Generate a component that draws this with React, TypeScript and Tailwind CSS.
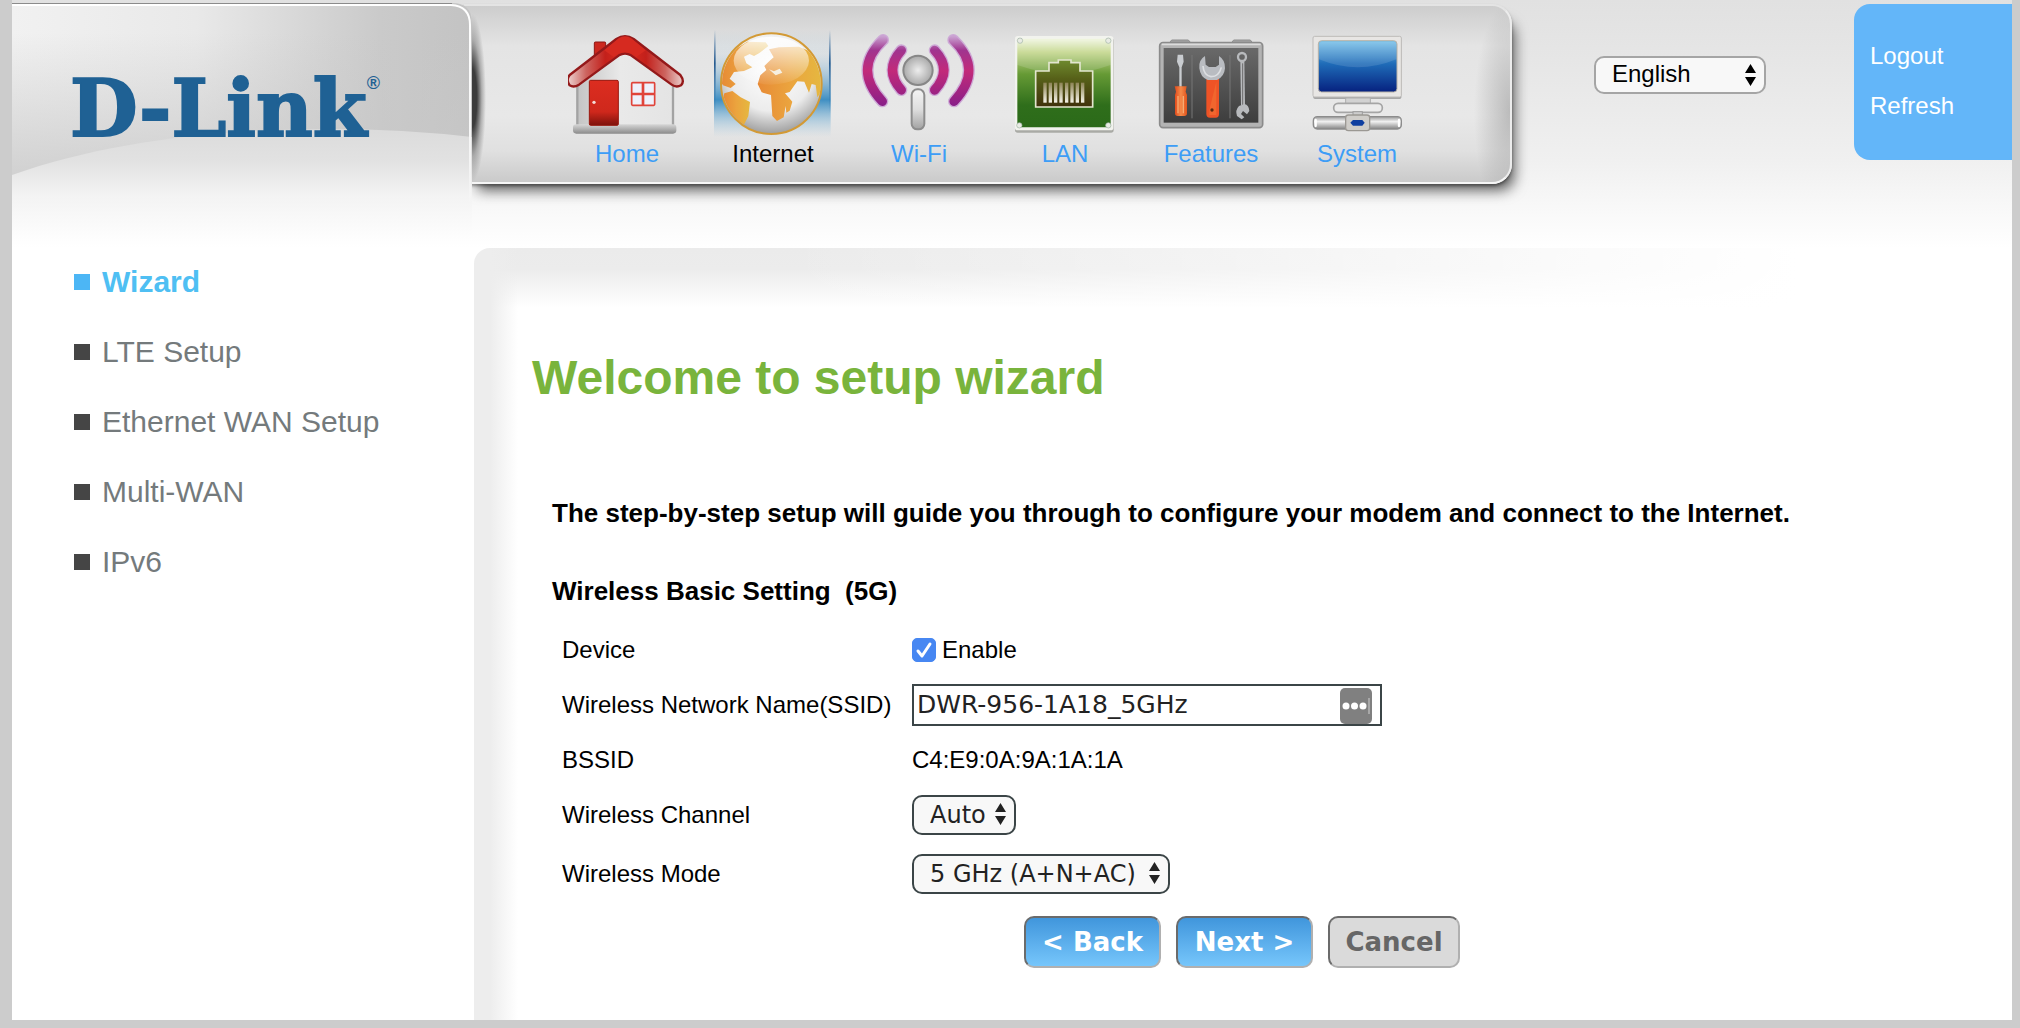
import { useState } from "react";
import type { ReactNode } from "react";

function HomeIcon() {
  return (
    <svg viewBox="87 60 354 324" className="h-[108px] w-[118px]" aria-hidden="true">
      <defs>
        <linearGradient id="wall" x1="0" x2="1" y1="0" y2="0">
          <stop offset="0" stopColor="#c4c4c4" />
          <stop offset="0.45" stopColor="#e9e9e9" />
          <stop offset="1" stopColor="#e4e4e4" />
        </linearGradient>
        <linearGradient id="door" x1="0" x2="0" y1="0" y2="1">
          <stop offset="0" stopColor="#dc2d20" />
          <stop offset="0.7" stopColor="#cf281c" />
          <stop offset="1" stopColor="#7d120c" />
        </linearGradient>
        <linearGradient id="base" x1="0" x2="0" y1="0" y2="1">
          <stop offset="0" stopColor="#d6d6d6" />
          <stop offset="1" stopColor="#8b8b8b" />
        </linearGradient>
        <linearGradient id="roof" gradientUnits="userSpaceOnUse" x1="90" x2="430" y1="0" y2="0">
          <stop offset="0" stopColor="#eacbc9" />
          <stop offset="0.15" stopColor="#cd6560" />
          <stop offset="0.32" stopColor="#c3201b" />
          <stop offset="0.5" stopColor="#dc2d20" />
          <stop offset="0.68" stopColor="#c3201b" />
          <stop offset="0.85" stopColor="#cd6560" />
          <stop offset="1" stopColor="#eacbc9" />
        </linearGradient>
      </defs>
      <path d="M115 225 L258 120 L402 225 V350 H115 Z" fill="url(#wall)" stroke="#a3a3a3" strokeWidth="7" />
      <rect x="102" y="343" width="310" height="28" rx="10" fill="url(#base)" />
      <rect x="166" y="96" width="34" height="50" rx="3" fill="#cc281f" stroke="#8c1714" strokeWidth="3" />
      <path
        d="M92 195 L232 87 Q258 70 284 87 L424 195 Q438 214 426 226 Q412 234 398 224 L276 136 Q258 126 240 136 L120 224 Q104 234 92 226 Q80 210 92 195 Z"
        fill="url(#roof)"
        stroke="#94191a"
        strokeWidth="7"
        strokeLinejoin="round"
      />
      <path d="M196 121 L240 84 Q258 74 276 84 L320 121 L292 141 L276 130 Q258 122 240 130 L224 141 Z" fill="#d62a20" />
      <rect x="151" y="211" width="87" height="135" rx="4" fill="url(#door)" stroke="#98180f" strokeWidth="3" />
      <circle cx="165" cy="277" r="5" fill="#f3dcd8" />
      <rect x="278" y="218" width="69" height="68" rx="3" fill="#eef1fb" stroke="#e0443a" strokeWidth="5" />
      <path d="M312 218 V286 M278 252 H347" stroke="#e0443a" strokeWidth="8" />
    </svg>
  );
}

function InternetIcon() {
  return (
    <svg viewBox="525 60 354 324" className="h-[108px] w-[118px]" aria-hidden="true">
      <defs>
        <linearGradient id="glow" x1="0" x2="0" y1="0" y2="1">
          <stop offset="0" stopColor="#3b8cc0" stopOpacity="0" />
          <stop offset="0.22" stopColor="#a8c8dc" stopOpacity="0.15" />
          <stop offset="0.65" stopColor="#3f8fc3" />
          <stop offset="1" stopColor="#9fc8e0" stopOpacity="0" />
        </linearGradient>
        <linearGradient id="glowEdge" x1="0" x2="0" y1="0" y2="1">
          <stop offset="0" stopColor="#245a90" stopOpacity="0" />
          <stop offset="0.4" stopColor="#245a90" />
          <stop offset="1" stopColor="#2b74ae" stopOpacity="0" />
        </linearGradient>
        <radialGradient id="sea" cx="0.5" cy="0.35" r="0.65">
          <stop offset="0" stopColor="#ffffff" />
          <stop offset="0.65" stopColor="#ececec" />
          <stop offset="1" stopColor="#9f9f9f" />
        </radialGradient>
        <linearGradient id="land" x1="0" x2="1" y1="0" y2="0">
          <stop offset="0" stopColor="#e78a35" />
          <stop offset="0.5" stopColor="#eba43e" />
          <stop offset="1" stopColor="#e5b840" />
        </linearGradient>
        <linearGradient id="shine" x1="0" x2="0" y1="0" y2="1">
          <stop offset="0" stopColor="#ffffff" stopOpacity="0.85" />
          <stop offset="1" stopColor="#ffffff" stopOpacity="0.05" />
        </linearGradient>
        <clipPath id="globeClip">
          <circle cx="697" cy="221" r="148" />
        </clipPath>
      </defs>
      <rect x="525" y="60" width="350" height="322" fill="url(#glow)" />
      <rect x="525" y="60" width="5" height="250" fill="url(#glowEdge)" />
      <rect x="870" y="60" width="5" height="250" fill="url(#glowEdge)" />
      <circle cx="697" cy="221" r="151" fill="url(#sea)" stroke="#d39a35" strokeWidth="6" />
      <g clipPath="url(#globeClip)" fill="url(#land)">
        <path d="M545 215 L550 170 L585 120 L625 95 L680 97 L688 108 L660 130 L645 138 L632 132 L615 140 L622 160 L640 172 L615 183 L585 186 L572 206 L590 222 L575 234 L552 226 Z" />
        <path d="M556 250 L580 243 L605 262 L633 276 L628 318 L612 350 L595 330 L570 300 L552 270 Z" />
        <path d="M690 118 L720 112 L780 110 L850 140 V240 L835 262 L830 225 L818 222 L810 248 L796 215 L775 214 L752 246 L738 250 L760 275 L752 302 L742 308 L740 288 L734 322 L714 333 L700 318 L696 255 L668 247 L656 222 L664 196 L682 180 L676 168 L692 152 L704 142 Z" />
        <path d="M690 178 L705 184 L722 176 L730 188 L710 196 Z" fill="#f3ead6" />
      </g>
      <ellipse cx="697" cy="152" rx="113" ry="72" fill="url(#shine)" />
    </svg>
  );
}

function WifiIcon() {
  return (
    <svg viewBox="63 60 354 324" className="h-[108px] w-[118px]" aria-hidden="true">
      <defs>
        <linearGradient id="wave" gradientUnits="userSpaceOnUse" x1="0" x2="0" y1="80" y2="285">
          <stop offset="0" stopColor="#c9a0d0" />
          <stop offset="0.2" stopColor="#a0348f" />
          <stop offset="0.5" stopColor="#c22a7a" />
          <stop offset="1" stopColor="#8a1f88" />
        </linearGradient>
        <radialGradient id="ball">
          <stop offset="0" stopColor="#ededed" />
          <stop offset="1" stopColor="#a9a9a9" />
        </radialGradient>
        <linearGradient id="stick" x1="0" x2="0" y1="0" y2="1">
          <stop offset="0" stopColor="#f4f4f4" />
          <stop offset="0.5" stopColor="#dedede" />
          <stop offset="1" stopColor="#a2a2a2" />
        </linearGradient>
      </defs>
      <g fill="none" strokeLinecap="round">
        <g stroke="#cda9d6" strokeWidth="36">
          <path d="M132 90 Q40 178 130 274" />
          <path d="M343 90 Q435 178 345 274" />
          <path d="M187 121 Q134 180 187 240" />
          <path d="M287 121 Q342 180 287 240" />
        </g>
        <g stroke="url(#wave)" strokeWidth="28">
          <path d="M132 90 Q40 178 130 274" />
          <path d="M343 90 Q435 178 345 274" />
          <path d="M187 121 Q134 180 187 240" />
          <path d="M287 121 Q342 180 287 240" />
        </g>
      </g>
      <circle cx="237" cy="181" r="44" fill="url(#ball)" stroke="#878787" strokeWidth="6" />
      <rect x="218" y="238" width="38" height="120" rx="17" fill="url(#stick)" stroke="#8d8d8d" strokeWidth="6" />
    </svg>
  );
}

function LanIcon() {
  return (
    <svg viewBox="501 60 354 324" className="h-[108px] w-[118px]" aria-hidden="true">
      <defs>
        <linearGradient id="plate" x1="0" x2="0" y1="0" y2="1">
          <stop offset="0" stopColor="#f1f6e2" />
          <stop offset="0.15" stopColor="#c3d68a" />
          <stop offset="0.4" stopColor="#669a35" />
          <stop offset="0.75" stopColor="#2f6e1b" />
          <stop offset="1" stopColor="#2b6a19" />
        </linearGradient>
        <linearGradient id="jack" x1="0" x2="0" y1="0" y2="1">
          <stop offset="0" stopColor="#6f8a2f" />
          <stop offset="0.4" stopColor="#566018" />
          <stop offset="1" stopColor="#40310c" />
        </linearGradient>
        <linearGradient id="pin" x1="0" x2="0" y1="0" y2="1">
          <stop offset="0" stopColor="#8d8455" />
          <stop offset="1" stopColor="#f6f4e9" />
        </linearGradient>
      </defs>
      <rect x="528" y="84" width="296" height="284" rx="8" fill="#a9aaa5" />
      <rect x="528" y="78" width="295" height="283" rx="8" fill="#f2f3ee" />
      <rect x="535" y="86" width="280" height="266" rx="4" fill="url(#plate)" />
      <path d="M535 90 H815 V165 Q675 215 535 165 Z" fill="#ffffff" opacity="0.14" />
      <path d="M590 183 H630 V158 H658 V150 H696 V158 H723 V183 H761 V291 H590 Z" fill="url(#jack)" stroke="#e3e6cf" strokeWidth="5" />
      {[613, 629, 645, 661, 678, 694, 710, 726].map((x) => (
        <rect key={x} x={x} y="218" width="10" height="60" fill="url(#pin)" />
      ))}
      <g fill="#e9ebe4" stroke="#9fb2a4" strokeWidth="2">
        <circle cx="543" cy="92" r="8" />
        <circle cx="808" cy="92" r="8" />
        <circle cx="541" cy="346" r="8" />
        <circle cx="808" cy="346" r="8" />
      </g>
    </svg>
  );
}

function FeaturesIcon() {
  return (
    <svg viewBox="69 60 354 324" className="h-[108px] w-[118px]" aria-hidden="true">
      <defs>
        <linearGradient id="toolbox" x1="0" x2="0" y1="0" y2="1">
          <stop offset="0" stopColor="#696969" />
          <stop offset="1" stopColor="#3d3d3d" />
        </linearGradient>
        <linearGradient id="grip" x1="0" x2="1" y1="0" y2="0">
          <stop offset="0" stopColor="#e0481a" />
          <stop offset="0.5" stopColor="#f58a4a" />
          <stop offset="1" stopColor="#e2541c" />
        </linearGradient>
      </defs>
      <path d="M120 100 L128 90 H178 L187 100 M306 100 L314 90 H364 L372 100" fill="#a3a3a3" stroke="#8f8f8f" strokeWidth="3" />
      <rect x="92" y="98" width="309" height="255" rx="10" fill="#b3b3b3" stroke="#8b8b8b" strokeWidth="5" />
      <path d="M98 103 H395" stroke="#dcdcdc" strokeWidth="5" />
      <rect x="104" y="114" width="284" height="224" fill="url(#toolbox)" />
      <path d="M189 135 V325 M303 135 V325" stroke="#777777" strokeWidth="3" />
      <path d="M146 134 H162 L164 155 L158 172 V230 H151 V172 L144 155 Z" fill="#c9ccd0" />
      <path d="M137 229 H173 L170 245 L174 255 V310 Q174 318 166 318 H146 Q138 318 138 310 V255 L141 245 Z" fill="url(#grip)" />
      <path d="M147 258 V310 M163 258 V310" stroke="#f7ab72" strokeWidth="4" />
      <path d="M232 205 H270 V312 Q270 323 260 323 H243 Q232 323 232 312 Z" fill="#ee5326" />
      <path d="M241 300 L262 215 V315 H241 Z" fill="#f47a35" opacity="0.5" />
      <circle cx="249" cy="300" r="5" fill="#5f2a10" />
      <path d="M228 138 Q208 150 211 175 Q214 202 236 210 H264 Q286 200 288 175 Q289 150 270 138 V164 L260 171 H240 L230 164 Z" fill="#b9bcc1" />
      <path d="M222 168 Q224 196 246 200 Q270 200 277 172" fill="none" stroke="#dddfe2" strokeWidth="5" />
      <circle cx="339" cy="141" r="12" fill="none" stroke="#b8babd" strokeWidth="7" />
      <path d="M334 155 H346 L348 286 H336 Z" fill="#b8babd" />
      <path d="M341 160 V285" stroke="#6b6b6b" strokeWidth="3" />
      <path d="M330 288 Q318 300 324 318 L338 328 L346 322 L336 312 L342 303 L354 313 L361 303 Q360 285 346 282 Z" fill="#b8babd" />
    </svg>
  );
}

function SystemIcon() {
  return (
    <svg viewBox="507 60 354 324" className="h-[108px] w-[118px]" aria-hidden="true">
      <defs>
        <linearGradient id="screen" x1="0" x2="0" y1="0" y2="1">
          <stop offset="0" stopColor="#7cc3ea" />
          <stop offset="0.45" stopColor="#1f6cb8" />
          <stop offset="1" stopColor="#06217f" />
        </linearGradient>
        <linearGradient id="pipe" x1="0" x2="0" y1="0" y2="1">
          <stop offset="0" stopColor="#9a9a9a" />
          <stop offset="0.4" stopColor="#f1f1f1" />
          <stop offset="1" stopColor="#858585" />
        </linearGradient>
      </defs>
      <rect x="553" y="84" width="264" height="183" rx="5" fill="#a7a7a7" />
      <rect x="552" y="79" width="265" height="182" rx="5" fill="#e8e6e4" stroke="#bdbbb9" strokeWidth="3" />
      <rect x="568" y="92" width="236" height="154" rx="10" fill="url(#screen)" stroke="#b9b3a8" strokeWidth="3" />
      <path d="M578 96 H794 Q802 96 802 104 V148 Q686 196 570 148 V104 Q570 96 578 96 Z" fill="#ffffff" opacity="0.12" />
      <rect x="650" y="264" width="74" height="20" fill="#d2d2d2" stroke="#adadad" strokeWidth="3" />
      <rect x="614" y="280" width="146" height="27" rx="13" fill="#ececec" stroke="#a5a5a5" strokeWidth="5" />
      <rect x="672" y="305" width="28" height="18" fill="#cccccc" stroke="#9b9b9b" strokeWidth="3" />
      <rect x="553" y="320" width="264" height="37" rx="12" fill="url(#pipe)" stroke="#8c8c8c" strokeWidth="4" />
      <path d="M560 330 V348 M810 330 V348" stroke="#ffffff" strokeWidth="7" strokeLinecap="round" />
      <rect x="650" y="315" width="72" height="47" rx="8" fill="#cfcdc9" stroke="#9b9893" strokeWidth="4" />
      <path d="M672 330 H700 L707 338 L700 347 H672 L664 338 Z" fill="#0f3fa0" />
    </svg>
  );
}

const tabs = [
  { name: "Home", icon: <HomeIcon /> },
  { name: "Internet", icon: <InternetIcon /> },
  { name: "Wi-Fi", icon: <WifiIcon /> },
  { name: "LAN", icon: <LanIcon /> },
  { name: "Features", icon: <FeaturesIcon /> },
  { name: "System", icon: <SystemIcon /> },
];

const menu = ["Wizard", "LTE Setup", "Ethernet WAN Setup", "Multi-WAN", "IPv6"];

function Arrows({ className }: { className: string }) {
  return (
    <svg
      viewBox="0 0 11 22"
      aria-hidden="true"
      className={"pointer-events-none absolute top-2 h-[22px] w-[11px] " + className}
    >
      <path d="M5.5 0 L11 9 H0 Z M5.5 22 L11 13 H0 Z" fill="currentColor" />
    </svg>
  );
}

function LogoPanel() {
  return (
    <div className="relative z-10 mt-[3px] h-[237px] w-[460px] shrink-0">
      <svg
        viewBox="0 0 460 237"
        preserveAspectRatio="none"
        className="absolute inset-0 h-full w-full"
        aria-hidden="true"
      >
        <defs>
          <linearGradient id="metal" x1="0" x2="1" y1="0" y2="0">
            <stop offset="0" stopColor="#f1f1f1" />
            <stop offset="0.4" stopColor="#e9e9e9" />
            <stop offset="0.8" stopColor="#cacaca" />
            <stop offset="1" stopColor="#c3c3c3" />
          </linearGradient>
          <linearGradient id="dusk" gradientUnits="userSpaceOnUse" x1="0" x2="0" y1="30" y2="175">
            <stop offset="0" stopColor="#c8c8c8" stopOpacity="0" />
            <stop offset="1" stopColor="#c8c8c8" stopOpacity="0.8" />
          </linearGradient>
          <linearGradient id="swoosh" gradientUnits="userSpaceOnUse" x1="0" x2="0" y1="125" y2="237">
            <stop offset="0" stopColor="#dbdbdb" />
            <stop offset="0.3" stopColor="#e2e2e2" />
            <stop offset="0.6" stopColor="#f3f3f3" />
            <stop offset="1" stopColor="#fefefe" />
          </linearGradient>
          <linearGradient id="rim" gradientUnits="userSpaceOnUse" x1="0" x2="0" y1="0" y2="200">
            <stop offset="0" stopColor="#ffffff" />
            <stop offset="0.8" stopColor="#f4f4f4" />
            <stop offset="1" stopColor="#ffffff" stopOpacity="0" />
          </linearGradient>
        </defs>
        <path d="M0 0 H440 Q460 0 460 20 V237 H0 Z" fill="url(#metal)" />
        <path d="M0 0 H440 Q460 0 460 20 V237 H0 Z" fill="url(#dusk)" />
        <path d="M0 172 C90 140 200 126 320 126 Q390 126 460 134 V237 H0 Z" fill="url(#swoosh)" />
        <path d="M0 2 H439 Q458 3 458 22 V200" fill="none" stroke="url(#rim)" strokeWidth="2" />
        <path d="M0 0 H440" fill="none" stroke="#8b8b8b" strokeWidth="2" />
      </svg>
      <a
        href="#home"
        className="relative flex items-start pt-[60px] pl-[58px] font-['DejaVu_Serif','Liberation_Serif',serif] text-[78px] leading-[92px] font-bold text-[#1f6194] [-webkit-text-stroke:2px_#1f6194]"
      >
        D-Link
        <sup className="top-0 pt-2 font-['Liberation_Sans',Arial,sans-serif] text-[18px] leading-6 [-webkit-text-stroke:0px]">
          ®
        </sup>
      </a>
    </div>
  );
}

function Row({ label, htmlFor, children }: { label: string; htmlFor: string; children: ReactNode }) {
  return (
    <div className="flex h-[55px] items-center last:h-16">
      <label htmlFor={htmlFor} className="w-[350px] shrink-0">
        {label}
      </label>
      {children}
    </div>
  );
}

export default function App() {
  const [language, setLanguage] = useState("English");
  const [enabled, setEnabled] = useState(true);
  const [ssid, setSsid] = useState("DWR-956-1A18_5GHz");
  const [channel, setChannel] = useState("Auto");
  const [mode, setMode] = useState("5 GHz (A+N+AC)");

  return (
    <div className="flex min-h-screen flex-col border-r-8 border-b-8 border-l-12 border-[#cccccc] bg-white bg-[linear-gradient(to_bottom,#e1e1e1,#e6e6e6_60px,#f0f0f0_160px,#ffffff_248px)] font-['Liberation_Sans',Arial,sans-serif] text-2xl text-black">
      <header className="flex items-start">
        <LogoPanel />

        <nav className="relative mt-1 -ml-2 flex min-w-0 gap-7 rounded-r-[20px] border-y-2 border-r-2 border-t-[#e4e4e4] border-r-[#ececec] border-b-[#f6f6f6] bg-[radial-gradient(ellipse_36px_110px_at_100%_60%,rgba(150,150,150,0.55),transparent),linear-gradient(to_bottom,#cdcdcd,#e4e4e4_40px,#e8e8e8_110px,#e0e0e0_145px,#cacaca)] pt-6 pr-[94px] pb-3 pl-[104px] shadow-[0_2px_3px_rgba(0,0,0,0.35),8px_12px_14px_-6px_rgba(0,0,0,0.65)]">
          <div className="absolute top-2 bottom-0 left-2 w-3.5 bg-[radial-gradient(ellipse_14px_84px_at_0%_50%,#3c3c3c_35%,rgba(120,120,120,0.5)_70%,rgba(200,200,200,0))]" />
          {tabs.map((tab) => (
            <a
              key={tab.name}
              href={"#" + tab.name}
              className={
                "flex flex-col items-center leading-8 " +
                (tab.name === "Internet" ? "text-black" : "text-[#3d9df6]")
              }
            >
              {tab.icon}
              {tab.name}
            </a>
          ))}
        </nav>

        <div className="relative mt-14 ml-[82px] shrink-0">
          <select
            aria-label="Language"
            value={language}
            onChange={(e) => setLanguage(e.target.value)}
            className="h-[38px] w-[172px] appearance-none rounded-[10px] border-2 border-[#a5a5a5] bg-[#f8f8f8] pb-0.5 pl-4 leading-8"
          >
            <option>English</option>
          </select>
          <Arrows className="right-2.5" />
        </div>

        <div className="mt-1 ml-auto flex h-[156px] w-[158px] shrink-0 flex-col rounded-l-2xl bg-[#63b6f9] pt-[27px] pl-4 leading-[50px] text-white">
          <a href="#logout">Logout</a>
          <a href="#refresh">Refresh</a>
        </div>
      </header>

      <div className="flex flex-1">
        <aside className="w-[462px] shrink-0 pt-[7px] pl-[62px] text-[30px] leading-[70px] text-[#747a7c]">
          <ul>
            {menu.map((item) => (
              <li key={item}>
                <a
                  href={"#" + item}
                  className={
                    "flex items-center gap-3 " + (item === "Wizard" ? "font-bold text-[#4fbff3]" : "")
                  }
                >
                  <span className={"h-4 w-4 " + (item === "Wizard" ? "bg-[#4cb6f5]" : "bg-[#454545]")} />
                  {item}
                </a>
              </li>
            ))}
          </ul>
        </aside>

        <main className="mt-2 min-w-0 flex-1 rounded-tl-[16px] bg-[linear-gradient(to_right,#ededed,#ededed_16px,rgba(255,255,255,0)_44px),linear-gradient(to_right,rgba(255,255,255,0)_20%,#ffffff_86%),linear-gradient(to_bottom,#ebebeb,#ececec_22px,#ffffff_60px)] pt-[98px] pl-[58px]">
          <h1 className="text-5xl leading-16 font-bold text-[#79b43c]">Welcome to setup wizard</h1>

          <form className="pl-5" onSubmit={(e) => e.preventDefault()}>
            <p className="mt-[87px] text-[26px] leading-8 font-bold">
              The step-by-step setup will guide you through to configure your modem and connect to the Internet.
            </p>
            <h2 className="mt-[46px] text-[26px] leading-8 font-bold">
              Wireless Basic Setting&nbsp; (5G)
            </h2>

            <div className="mt-[15px] pl-2.5">
              <Row label="Device" htmlFor="device">
                <span className="relative flex items-center">
                  <input
                    id="device"
                    type="checkbox"
                    checked={enabled}
                    onChange={(e) => setEnabled(e.target.checked)}
                    className="peer h-6 w-6 appearance-none rounded-[5px] border border-[#4787f2] bg-white checked:bg-[#4787f2]"
                  />
                  <svg
                    viewBox="0 0 24 24"
                    className="pointer-events-none absolute left-0 hidden h-6 w-6 peer-checked:block"
                    aria-hidden="true"
                  >
                    <path d="M6 13 L10 18 L18 6" fill="none" stroke="#ffffff" strokeWidth="3" strokeLinecap="round" strokeLinejoin="round" />
                  </svg>
                </span>
                <label htmlFor="device" className="pl-1.5">
                  Enable
                </label>
              </Row>

              <Row label="Wireless Network Name(SSID)" htmlFor="ssid">
                <span className="relative flex">
                  <input
                    id="ssid"
                    type="text"
                    value={ssid}
                    onChange={(e) => setSsid(e.target.value)}
                    className="h-[42px] w-[470px] border-2 border-[#3b4547] bg-white pr-12 pl-[3px] font-['DejaVu_Sans',Verdana,sans-serif] text-[25px] text-[#222222]"
                  />
                  <svg viewBox="0 0 32 36" className="absolute top-1 right-2.5 h-9 w-8" aria-hidden="true">
                    <rect width="32" height="36" rx="5" fill="#808080" />
                    <circle cx="6" cy="18" r="3.5" fill="#ffffff" />
                    <circle cx="14.5" cy="18" r="3.5" fill="#ffffff" />
                    <circle cx="23" cy="18" r="3.5" fill="#ffffff" />
                    <path d="M29 10 V26" stroke="#d0d0d0" />
                  </svg>
                </span>
              </Row>

              <Row label="BSSID" htmlFor="bssid">
                <output id="bssid">C4:E9:0A:9A:1A:1A</output>
              </Row>

              <Row label="Wireless Channel" htmlFor="channel">
                <span className="relative flex text-[#222222]">
                  <select
                    id="channel"
                    value={channel}
                    onChange={(e) => setChannel(e.target.value)}
                    className="h-10 w-[104px] appearance-none rounded-[10px] border-2 border-[#3b4547] bg-[#f8f8f8] pl-4 font-['DejaVu_Sans',Verdana,sans-serif]"
                  >
                    <option>Auto</option>
                  </select>
                  <Arrows className="right-2.5" />
                </span>
              </Row>

              <Row label="Wireless Mode" htmlFor="mode">
                <span className="relative flex text-[#222222]">
                  <select
                    id="mode"
                    value={mode}
                    onChange={(e) => setMode(e.target.value)}
                    className="h-10 w-[258px] appearance-none rounded-[10px] border-2 border-[#3b4547] bg-[#f8f8f8] pl-4 font-['DejaVu_Sans',Verdana,sans-serif]"
                  >
                    <option>5 GHz (A+N+AC)</option>
                  </select>
                  <Arrows className="right-2.5" />
                </span>
              </Row>
            </div>

            <div className="mt-2.5 flex gap-[15px] pl-[472px] font-['DejaVu_Sans',Verdana,sans-serif] text-[26px] font-bold">
              <button
                type="button"
                className="h-[52px] w-[137px] rounded-[10px] border-2 border-t-[#6b6b6b] border-r-[#b0b0b0] border-b-[#b0b0b0] border-l-[#6b6b6b] bg-linear-to-b from-[#4096dc] to-[#76c6fb] text-white"
              >
                &lt; Back
              </button>
              <button
                type="submit"
                className="h-[52px] w-[137px] rounded-[10px] border-2 border-t-[#6b6b6b] border-r-[#b0b0b0] border-b-[#b0b0b0] border-l-[#6b6b6b] bg-linear-to-b from-[#4096dc] to-[#76c6fb] text-white"
              >
                Next &gt;
              </button>
              <button
                type="button"
                className="h-[52px] w-[132px] rounded-[10px] border-2 border-t-[#6b6b6b] border-r-[#b0b0b0] border-b-[#b0b0b0] border-l-[#6b6b6b] bg-[#dadada] text-[#666666]"
              >
                Cancel
              </button>
            </div>
          </form>
        </main>
      </div>
    </div>
  );
}
